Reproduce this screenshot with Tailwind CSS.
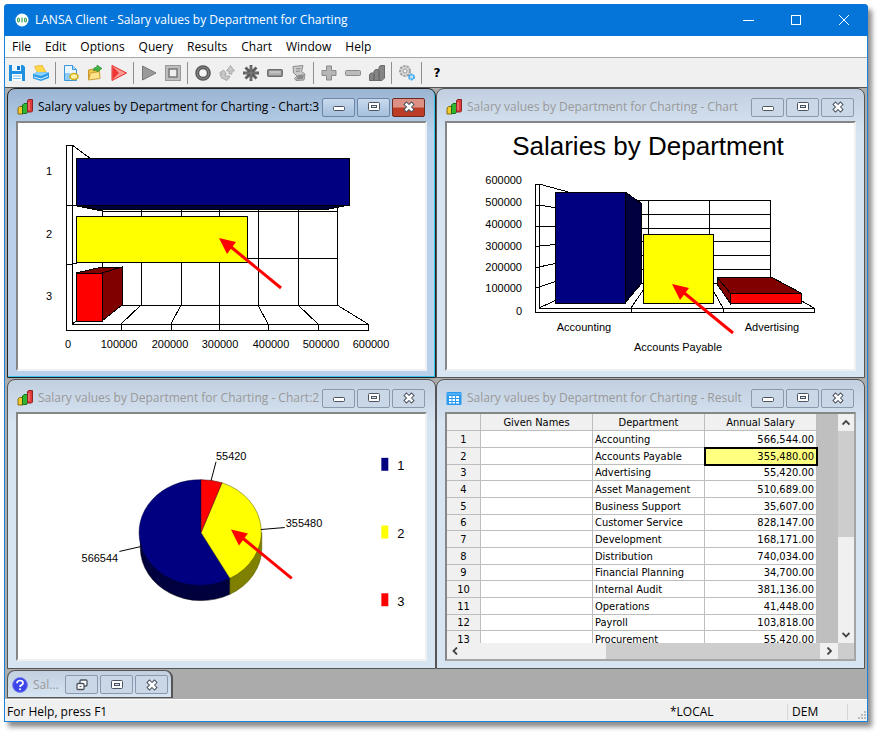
<!DOCTYPE html>
<html lang="en">
<head>
    <meta charset="UTF-8">
    <title>LANSA Client - Salary values by Department for Charting</title>
    <script src="https://cdn.jsdelivr.net/npm/@tailwindcss/browser@4"></script>
</head>
<body class="bg-white h-screen pt-1 pl-1 pr-[13px] pb-3 overflow-hidden font-['Open_Sans','Noto_Sans',sans-serif] text-xs text-black">

    <!-- shared icons -->
    <svg class="hidden">
        <symbol id="i-chart" viewBox="0 0 16 16">
            <path d="M1 9l1.500-1.500H6V15H1z" fill="#f0c92c" stroke="#8a6a12"/>
            <path d="M5.500 6L7 4.500h3.500V13L9.500 14.500h-4z" fill="#2fb52f" stroke="#14701a"/>
            <path d="M10.500 1.500L11.500.5h4V12l-1 1h-4z" fill="#e03a3a" stroke="#8d2727"/>
            <path d="M12 3v8" stroke="#f79a9a"/>
        </symbol>
        <symbol id="i-min" viewBox="0 0 14 12">
            <rect x="1.500" y="5.500" width="11" height="4" rx="1" fill="#fff" stroke="#4b5260"/>
        </symbol>
        <symbol id="i-max" viewBox="0 0 14 12">
            <rect x="1.500" y="1.500" width="11" height="8" rx="1" fill="#fff" stroke="#4b5260"/>
            <rect x="4.500" y="4.500" width="5" height="2" fill="#dfe7f1" stroke="#4b5260"/>
        </symbol>
        <symbol id="i-close" viewBox="0 0 14 12">
            <path d="M4.500 3.500l5 5M9.500 3.500l-5 5" stroke="#4b5260" stroke-width="4.500" stroke-linecap="square"/>
            <path d="M4.500 3.500l5 5M9.500 3.500l-5 5" stroke="#fff" stroke-width="2.500" stroke-linecap="square"/>
        </symbol>
        <symbol id="i-restore" viewBox="0 0 14 12">
            <rect x="5" y="1" width="7" height="6" rx="1" fill="#fff" stroke="#4b5260" stroke-width="1.300"/>
            <rect x="2" y="4.500" width="7" height="6" rx="1" fill="#fff" stroke="#4b5260" stroke-width="1.300"/>
            <path d="M4.500 7.500h2" stroke="#4b5260"/>
        </symbol>
    </svg>

    <div class="h-full flex flex-col bg-[#f0f0f0] border-x border-b border-[#1a82dc] rounded-t shadow-[4px_5px_5px_rgba(0,0,0,0.45)]">

        <!-- title bar -->
        <header class="h-8 shrink-0 -mx-px flex items-center bg-[#0575da] text-white rounded-t pl-[10px]">
            <svg class="w-4 h-4 mr-[5px]" viewBox="0 0 16 16">
                <circle cx="8" cy="8" r="6.500" fill="#fff"/>
                <g fill="none" stroke="#3fa75a" stroke-width="1.200"><ellipse cx="4.500" cy="8" rx="1" ry="2"/><path d="M8 5.500v5"/><ellipse cx="11.500" cy="8" rx="1" ry="2"/></g>
            </svg>
            <h1 class="flex-1">LANSA Client - Salary values by Department for Charting</h1>
            <button class="w-12 h-8 flex items-center justify-center" aria-label="Minimize">
                <svg class="w-3 h-3" viewBox="0 0 12 12"><path d="M1 6.500h11" stroke="#fff"/></svg>
            </button>
            <button class="w-12 h-8 flex items-center justify-center" aria-label="Maximize">
                <svg class="w-3 h-3" viewBox="0 0 12 12"><rect x="1.500" y="1.500" width="9" height="9" fill="none" stroke="#fff"/></svg>
            </button>
            <button class="w-12 h-8 flex items-center justify-center" aria-label="Close">
                <svg class="w-3 h-3" viewBox="0 0 12 12"><path d="M1 1l10 10M11 1L1 11" stroke="#fff"/></svg>
            </button>
        </header>

        <!-- menu -->
        <nav class="h-[22px] shrink-0 flex items-center gap-[14px] pl-[7px] bg-white border-b border-[#a8a8a8]">
            <button>File</button>
            <button>Edit</button>
            <button>Options</button>
            <button>Query</button>
            <button>Results</button>
            <button>Chart</button>
            <button>Window</button>
            <button>Help</button>
        </nav>

        <!-- toolbar -->
        <div class="h-[29px] shrink-0 flex items-center">
            <button class="w-6 flex justify-center" aria-label="Save">
                <svg class="w-4 h-4" viewBox="0 0 16 16"><path d="M0 0h14l2 2v14H0z" fill="#1f8fe0"/><path d="M3 0h9v6H3z" fill="#eaf6ff"/><path d="M8 1h3v4H8z" fill="#1673c4"/><path d="M3 9h10v7H3z" fill="#fff"/><path d="M4 11h8M4 13.500h8" stroke="#76bdf0"/></svg>
            </button>
            <button class="w-6 flex justify-center" aria-label="Print">
                <svg class="w-4 h-4" viewBox="0 0 16 16"><path d="M1.500 1.500L9 0l4 7-8 1.500z" fill="#ffd84a" stroke="#e3ac1c" stroke-width=".7"/><path d="M0 9l4-2 12 .5V13l-8 3-8-2.500z" fill="#2c9be8"/><path d="M0 9l4-2 12 .5L8 11z" fill="#8fd2fb"/><path d="M1 12l7 2 7-3" stroke="#dff2ff" fill="none"/></svg>
            </button>
            <span class="w-px h-[22px] ml-[2px] mr-[3px] bg-[#8f8f8f]"></span>
            <button class="w-6 flex justify-center" aria-label="New query">
                <svg class="w-4 h-4" viewBox="0 0 16 16"><path d="M1.500.5h8l4 4v11h-12z" fill="#eaf6ff" stroke="#3a97dc"/><path d="M9.500.5v4h4" fill="#a9d8fa" stroke="#3a97dc"/><path d="M2 8h5v7H2z" fill="#8dcaf5"/><ellipse cx="11" cy="11.500" rx="4" ry="3" fill="#fff2a8" stroke="#cfae1c" stroke-width="1.600"/></svg>
            </button>
            <button class="w-6 flex justify-center" aria-label="Open query">
                <svg class="w-4 h-4" viewBox="0 0 16 16"><path d="M1.500 14V5l5-1 1 1.500 5-.5v8z" fill="#f3c44c" stroke="#c9962c"/><path d="M1.500 15l2-7 9-1.500.5 7z" fill="#ffe38a" stroke="#cf9f35"/><path d="M6 5q1-3 4-3V0l5 3.500L10 7V5Q8 4.500 7 6z" fill="#43b649" stroke="#22852a" stroke-width=".6"/></svg>
            </button>
            <button class="w-6 flex justify-center" aria-label="Run query">
                <svg class="w-4 h-4" viewBox="0 0 16 16"><path d="M1 .5L15.500 8 1 15.500z" fill="#ff9a92" stroke="#e22c2c"/><path d="M1.500 1.500L8 8l-6.500 6.500z" fill="#ee3434"/></svg>
            </button>
            <span class="w-px h-[22px] ml-[2px] mr-[3px] bg-[#8f8f8f]"></span>
            <button class="w-6 flex justify-center" aria-label="Run">
                <svg class="w-4 h-4" viewBox="0 0 16 16"><path d="M1.500 1L15 8 1.500 15z" fill="#9a9a9a" stroke="#777"/></svg>
            </button>
            <button class="w-6 flex justify-center" aria-label="Stop">
                <svg class="w-4 h-4" viewBox="0 0 16 16"><rect x=".5" y=".5" width="15" height="15" fill="#bdbdbd" stroke="#999"/><rect x="4" y="4" width="8" height="8" fill="#eee" stroke="#777" stroke-width="1.500"/></svg>
            </button>
            <span class="w-px h-[22px] ml-[2px] mr-[3px] bg-[#8f8f8f]"></span>
            <button class="w-6 flex justify-center" aria-label="Circle">
                <svg class="w-4 h-4" viewBox="0 0 16 16"><circle cx="8" cy="8" r="5.800" fill="#f4f4f4" stroke="#555" stroke-width="4"/><circle cx="8" cy="8" r="5.800" fill="none" stroke="#7d7d7d" stroke-width="1.500"/></svg>
            </button>
            <button class="w-6 flex justify-center" aria-label="Sort">
                <svg class="w-4 h-4" viewBox="0 0 16 16"><path d="M11.500.5L15.500 6h-2.500v3h-3V6H7.500zM4.500 5l3 4H6v2h5l-1.500 3H8v1.500L2.500 13 1 9.500h1.500V8H.5z" fill="#c8c8c8" stroke="#a0a0a0" stroke-width=".8"/></svg>
            </button>
            <button class="w-6 flex justify-center" aria-label="Select all">
                <svg class="w-4 h-4" viewBox="0 0 16 16"><path d="M8 0v16M0 8h16M2.500 2.500l11 11M13.500 2.500l-11 11" stroke="#5c5c5c" stroke-width="2.800"/><path d="M8 1.500v13M1.500 8h13" stroke="#8c8c8c" stroke-width=".8"/></svg>
            </button>
            <button class="w-6 flex justify-center" aria-label="Box">
                <svg class="w-4 h-4" viewBox="0 0 16 16"><rect x=".8" y="4.800" width="14.400" height="6.400" rx="1" fill="#b0b0b0" stroke="#6c6c6c" stroke-width="1.500"/><path d="M3 7h10" stroke="#d5d5d5"/></svg>
            </button>
            <button class="w-6 flex justify-center" aria-label="Report">
                <svg class="w-4 h-4" viewBox="0 0 16 16"><path d="M2 1.500l10-1-1.500 6L14 9l-1 6-8 .5-1.500-2L6 11 2.500 8z" fill="#c9c9c9" stroke="#8e8e8e"/><path d="M5 4l4.500-.5M5 6.500l4-.5" stroke="#888"/><path d="M7 10l6-.5-1 4.500-7 .5z" fill="#8b8b8b"/></svg>
            </button>
            <span class="w-px h-[22px] ml-[2px] mr-[3px] bg-[#8f8f8f]"></span>
            <button class="w-6 flex justify-center" aria-label="Add">
                <svg class="w-4 h-4" viewBox="0 0 16 16"><path d="M5.500 1h5v4.500H15v5h-4.500V15h-5v-4.500H1v-5h4.500z" fill="#b5b5b5" stroke="#8a8a8a"/></svg>
            </button>
            <button class="w-6 flex justify-center" aria-label="Remove">
                <svg class="w-4 h-4" viewBox="0 0 16 16"><rect x=".5" y="5.500" width="15" height="5" rx="1" fill="#bcbcbc" stroke="#8a8a8a"/></svg>
            </button>
            <button class="w-6 flex justify-center" aria-label="Chart">
                <svg class="w-4 h-4" viewBox="0 0 16 16"><path d="M.5 9.500L2 8h3V6l1.500-1.500H10V2l1.500-1.500h4V13L13 15.500H.5z" fill="#858585" stroke="#6b6b6b"/><path d="M5 9v6M10 5.500V15" stroke="#5b5b5b"/></svg>
            </button>
            <span class="w-px h-[22px] ml-[2px] mr-[3px] bg-[#8f8f8f]"></span>
            <button class="w-6 flex justify-center" aria-label="Settings">
                <svg class="w-4 h-4" viewBox="0 0 16 16"><circle cx="6" cy="6" r="5" fill="#d9d9d9" stroke="#a3a3a3" stroke-width="2" stroke-dasharray="2.500 1"/><circle cx="6" cy="6" r="2" fill="#f5f5f5" stroke="#999"/><circle cx="12.500" cy="12" r="2.500" fill="#c5e6fb" stroke="#3ca5ea" stroke-width="2" stroke-dasharray="2 .6"/></svg>
            </button>
            <span class="w-px h-[22px] ml-[2px] mr-[3px] bg-[#8f8f8f]"></span>
            <button class="w-6 text-center font-['DejaVu_Sans',sans-serif] font-bold" aria-label="Help">?</button>
        </div>

        <!-- child windows -->
        <main class="flex-1 min-h-0 flex flex-col bg-[#ababab] border-t border-[#555] px-[2px]">
            <div class="flex-1 grid grid-cols-2 grid-rows-2 gap-y-px min-h-0">

                <section class="flex flex-col min-h-0 px-2 pb-[6px] rounded-t-lg border border-[#222] bg-[#b9d1ea] bg-linear-to-b from-[#9ab4d2] to-[#b9d1ea] to-15% shadow-[inset_-1px_-1px_0_#35c6ee]">
                    <div class="h-8 shrink-0 flex items-center gap-[2px] pt-1 pl-px pr-[2px]">
                        <svg class="w-4 h-4 mr-[3px]"><use href="#i-chart"/></svg>
                        <h2 class="flex-1 whitespace-nowrap">Salary values by Department for Charting - Chart:3</h2>
                        <button class="w-[33px] h-[19px] flex items-center justify-center rounded-xs border border-[#6e86a6] bg-linear-to-b from-[#c8daee] to-[#a5bfdd]" aria-label="Minimize"><svg class="w-[14px] h-3"><use href="#i-min"/></svg></button>
                        <button class="w-[33px] h-[19px] flex items-center justify-center rounded-xs border border-[#6e86a6] bg-linear-to-b from-[#c8daee] to-[#a5bfdd]" aria-label="Maximize"><svg class="w-[14px] h-3"><use href="#i-max"/></svg></button>
                        <button class="w-[33px] h-[19px] flex items-center justify-center rounded-xs border border-[#6b2a22] bg-linear-to-b from-[#dc9184] from-45% to-[#bd3c26] to-55%" aria-label="Close"><svg class="w-[14px] h-3"><use href="#i-close"/></svg></button>
                    </div>
                    <div class="flex-1 min-h-0 bg-white border-2 border-t-[#868686] border-l-[#868686] border-r-[#eef0f2] border-b-[#eef0f2]">
                        <svg class="w-full h-full font-['Liberation_Sans',Arial,sans-serif] text-[11px]" viewBox="18 122 407 246" shape-rendering="crispEdges">
                            <g fill="none" stroke="#000">
                                <path d="M66 144h6v180M66 144v185h302v-6H72M66 204h6M66 263h6M72 144l30 22v142M72 323l30-19"/>
                                <path d="M102 210h235M102 257h235M122 304h215M337 204v100l31 19v6"/>
                                <path d="M141 205v99l-20 19v6M181 205v99l-10 19v6M219 205v124M258 205v99l10 19v6M298 205v99l20 19v6"/>
                                <path d="M72 204l30 6M72 263l30-6"/>
                            </g>
                            <g stroke="#000">
                                <path d="M76 204h273l-20 4H96z" fill="#00003f"/>
                                <path d="M76 157h273v47H76z" fill="#000080"/>
                                <path d="M76 215h171v46H76z" fill="#ff0"/>
                                <path d="M76 272l26-6h20l-20 6z" fill="#800000"/>
                                <path d="M102 272l20-6v38l-20 16z" fill="#800000"/>
                                <path d="M76 272h26v48H76z" fill="#f00"/>
                            </g>
                            <g text-anchor="middle">
                                <text x="49" y="174">1</text>
                                <text x="49" y="237">2</text>
                                <text x="49" y="299">3</text>
                                <text x="68" y="347">0</text>
                                <text x="119" y="347">100000</text>
                                <text x="170" y="347">200000</text>
                                <text x="220" y="347">300000</text>
                                <text x="271" y="347">400000</text>
                                <text x="321" y="347">500000</text>
                                <text x="371" y="347">600000</text>
                            </g>
                            <g shape-rendering="auto"><path d="M281 287l-50-41" stroke="#f00" stroke-width="3"/><path d="M219 237l17 4-9 12z" fill="#f00"/></g>
                        </svg>
                    </div>
                </section>

                <section class="flex flex-col min-h-0 px-2 pb-[6px] rounded-t-lg border border-[#555] bg-linear-to-b from-[#c1cfe0] to-[#d7e4f2] to-15%">
                    <div class="h-8 shrink-0 flex items-center gap-[2px] pt-1 pl-px pr-[2px]">
                        <svg class="w-4 h-4 mr-[3px]"><use href="#i-chart"/></svg>
                        <h2 class="flex-1 whitespace-nowrap text-[#999]">Salary values by Department for Charting - Chart</h2>
                        <button class="w-[33px] h-[19px] flex items-center justify-center rounded-xs border border-[#8b99ae] bg-[#cad7e6]" aria-label="Minimize"><svg class="w-[14px] h-3"><use href="#i-min"/></svg></button>
                        <button class="w-[33px] h-[19px] flex items-center justify-center rounded-xs border border-[#8b99ae] bg-[#cad7e6]" aria-label="Maximize"><svg class="w-[14px] h-3"><use href="#i-max"/></svg></button>
                        <button class="w-[33px] h-[19px] flex items-center justify-center rounded-xs border border-[#8b99ae] bg-[#cad7e6]" aria-label="Close"><svg class="w-[14px] h-3"><use href="#i-close"/></svg></button>
                    </div>
                    <div class="flex-1 min-h-0 bg-white border-2 border-t-[#868686] border-l-[#868686] border-r-[#eef0f2] border-b-[#eef0f2]">
                        <svg class="w-full h-full font-['Liberation_Sans',Arial,sans-serif] text-[11px]" viewBox="447 122 407 246" shape-rendering="crispEdges">
                            <text x="648" y="154" text-anchor="middle" class="text-[26px]">Salaries by Department</text>
                            <g fill="none" stroke="#000">
                                <path d="M535 183h4v124M535 183v128h279v-4H539M539 183l55 15v85M535 204h4l55 9M535 225h4l55 2M535 245h4l55-5M535 266h4l55-12M535 286h4l55-18M539 307l55-25"/>
                                <path d="M594 199h176v84M594 213h176M594 227h176M594 240h176M594 254h176M594 268h176M594 282h176l44 25v4"/>
                                <path d="M648 199v83l-17 25v4M709 199v83l14 25v4"/>
                            </g>
                            <g stroke="#000">
                                <path d="M625 191l16 11v81l-16 19z" fill="#00003f"/>
                                <path d="M555 191h70v111h-70z" fill="#000080"/>
                                <path d="M643 233h70v69h-70z" fill="#ff0"/>
                                <path d="M717 276h54l30 16h-71z" fill="#800000"/>
                                <path d="M717 276l13 16v10l-13-19z" fill="#800000"/>
                                <path d="M730 292h71v10h-71z" fill="#f00"/>
                            </g>
                            <g text-anchor="end">
                                <text x="522" y="183">600000</text>
                                <text x="522" y="205">500000</text>
                                <text x="522" y="227">400000</text>
                                <text x="522" y="249">300000</text>
                                <text x="522" y="270">200000</text>
                                <text x="522" y="291">100000</text>
                                <text x="522" y="314">0</text>
                            </g>
                            <g text-anchor="middle">
                                <text x="584" y="330">Accounting</text>
                                <text x="678" y="350">Accounts Payable</text>
                                <text x="772" y="330">Advertising</text>
                            </g>
                            <g shape-rendering="auto"><path d="M733 332l-50-41" stroke="#f00" stroke-width="3"/><path d="M672 283l17 4-9 12z" fill="#f00"/></g>
                        </svg>
                    </div>
                </section>

                <section class="flex flex-col min-h-0 px-2 pb-[7px] rounded-t-lg border border-[#555] bg-linear-to-b from-[#c1cfe0] to-[#d7e4f2] to-15%">
                    <div class="h-8 shrink-0 flex items-center gap-[2px] pt-1 pl-px pr-[2px]">
                        <svg class="w-4 h-4 mr-[3px]"><use href="#i-chart"/></svg>
                        <h2 class="flex-1 whitespace-nowrap text-[#999]">Salary values by Department for Charting - Chart:2</h2>
                        <button class="w-[33px] h-[19px] flex items-center justify-center rounded-xs border border-[#8b99ae] bg-[#cad7e6]" aria-label="Minimize"><svg class="w-[14px] h-3"><use href="#i-min"/></svg></button>
                        <button class="w-[33px] h-[19px] flex items-center justify-center rounded-xs border border-[#8b99ae] bg-[#cad7e6]" aria-label="Maximize"><svg class="w-[14px] h-3"><use href="#i-max"/></svg></button>
                        <button class="w-[33px] h-[19px] flex items-center justify-center rounded-xs border border-[#8b99ae] bg-[#cad7e6]" aria-label="Close"><svg class="w-[14px] h-3"><use href="#i-close"/></svg></button>
                    </div>
                    <div class="flex-1 min-h-0 bg-white border-2 border-t-[#868686] border-l-[#868686] border-r-[#eef0f2] border-b-[#eef0f2]">
                        <svg class="w-full h-full font-['Liberation_Sans',Arial,sans-serif] text-[11px]" viewBox="18 413 407 246">
                            <path d="M140 532v16A61 53 0 0 0 230 594V578z" fill="#00003f" stroke="#000" stroke-width=".5"/>
                            <path d="M262 532v16A61 53 0 0 1 230 594V578z" fill="#808000" stroke="#555500" stroke-width=".5"/>
                            <path d="M201 532V479A61 53 0 1 0 230 578z" fill="#000080" stroke="#000040" stroke-width=".5"/>
                            <path d="M201 532L222 482A61 53 0 0 1 230 578z" fill="#ff0" stroke="#555500" stroke-width=".5"/>
                            <path d="M201 532V479A61 53 0 0 1 222 482z" fill="#f00" stroke="#400" stroke-width=".5"/>
                            <path d="M211 480l5-19M261 529l24-2M141 546l-22 5" stroke="#000" fill="none"/>
                            <text x="216" y="459">55420</text>
                            <text x="286" y="526">355480</text>
                            <text x="81" y="562">566544</text>
                            <path d="M382 457h7v13h-7z" fill="#000080"/>
                            <path d="M382 525h7v13h-7z" fill="#ff0"/>
                            <path d="M382 593h7v13h-7z" fill="#f00"/>
                            <g class="text-[13px]">
                                <text x="398" y="469">1</text>
                                <text x="398" y="538">2</text>
                                <text x="398" y="606">3</text>
                            </g>
                            <path d="M292 578l-50-41" stroke="#f00" stroke-width="3"/><path d="M231 529l17 4-9 12z" fill="#f00"/>
                        </svg>
                    </div>
                </section>

                <section class="flex flex-col min-h-0 px-2 pb-[7px] rounded-t-lg border border-[#555] bg-linear-to-b from-[#c1cfe0] to-[#d7e4f2] to-15%">
                    <div class="h-8 shrink-0 flex items-center gap-[2px] pt-1 pl-px pr-[2px]">
                        <svg class="w-4 h-4 mr-[3px]" viewBox="0 0 16 16"><rect x=".5" y="2" width="15" height="13" rx="1" fill="#2a9af0"/><path d="M1 4h14" stroke="#74c2fa"/><path d="M3 6h2.500v2H3zM6.500 6H9v2H6.500zM10 6h3v2h-3zM3 9h2.500v2H3zM6.500 9H9v2H6.500zM10 9h3v2h-3zM3 12h2.500v1.500H3zM6.500 12H9v1.500H6.500zM10 12h3v1.500h-3z" fill="#fff"/></svg>
                        <h2 class="flex-1 whitespace-nowrap text-[#999]">Salary values by Department for Charting - Result</h2>
                        <button class="w-[33px] h-[19px] flex items-center justify-center rounded-xs border border-[#8b99ae] bg-[#cad7e6]" aria-label="Minimize"><svg class="w-[14px] h-3"><use href="#i-min"/></svg></button>
                        <button class="w-[33px] h-[19px] flex items-center justify-center rounded-xs border border-[#8b99ae] bg-[#cad7e6]" aria-label="Maximize"><svg class="w-[14px] h-3"><use href="#i-max"/></svg></button>
                        <button class="w-[33px] h-[19px] flex items-center justify-center rounded-xs border border-[#8b99ae] bg-[#cad7e6]" aria-label="Close"><svg class="w-[14px] h-3"><use href="#i-close"/></svg></button>
                    </div>
                    <div class="flex-1 min-h-0 flex flex-col border-2 border-[#868686] border-r-[#a5a5a5] border-b-[#a5a5a5]">
                        <div class="flex-1 min-h-0 flex">
                            <div class="flex-1 min-w-0 overflow-hidden bg-[#bfbfbf]">
                                <table class="table-fixed w-[370px] border-separate border-spacing-0 bg-white text-right font-['DejaVu_Sans_Condensed','DejaVu_Sans',sans-serif] text-[11px] leading-none [&_td]:border-r [&_td]:border-b [&_td]:border-[#bdbdbd] [&_th]:border-r [&_th]:border-b [&_th]:border-[#bdbdbd] [&_th]:bg-[#f0f0f0] [&_th]:font-normal [&_th]:text-center [&_td:nth-child(3)]:text-left [&_td:nth-child(3)]:pl-[2px] [&_td]:pr-[2px]">
                                    <colgroup><col class="w-[34px]"><col class="w-28"><col class="w-28"><col class="w-28"></colgroup>
                                    <thead>
                                        <tr class="h-[17px]"><th></th><th>Given Names</th><th>Department</th><th>Annual Salary</th></tr>
                                    </thead>
                                    <tbody class="[&>tr]:h-[17px] [&>tr:nth-child(3n)]:h-4">
                                        <tr><th>1</th><td></td><td>Accounting</td><td>566,544.00</td></tr>
                                        <tr><th>2</th><td></td><td>Accounts Payable</td><td class="bg-[#ffff80] outline-2 -outline-offset-1 outline-black">355,480.00</td></tr>
                                        <tr><th>3</th><td></td><td>Advertising</td><td>55,420.00</td></tr>
                                        <tr><th>4</th><td></td><td>Asset Management</td><td>510,689.00</td></tr>
                                        <tr><th>5</th><td></td><td>Business Support</td><td>35,607.00</td></tr>
                                        <tr><th>6</th><td></td><td>Customer Service</td><td>828,147.00</td></tr>
                                        <tr><th>7</th><td></td><td>Development</td><td>168,171.00</td></tr>
                                        <tr><th>8</th><td></td><td>Distribution</td><td>740,034.00</td></tr>
                                        <tr><th>9</th><td></td><td>Financial Planning</td><td>34,700.00</td></tr>
                                        <tr><th>10</th><td></td><td>Internal Audit</td><td>381,136.00</td></tr>
                                        <tr><th>11</th><td></td><td>Operations</td><td>41,448.00</td></tr>
                                        <tr><th>12</th><td></td><td>Payroll</td><td>103,818.00</td></tr>
                                        <tr><th>13</th><td></td><td>Procurement</td><td>55,420.00</td></tr>
                                    </tbody>
                                </table>
                            </div>
                            <!-- vertical scroll bar -->
                            <div class="w-4 shrink-0 flex flex-col bg-[#f0f0f0]">
                                <button class="h-[17px] flex items-center justify-center" aria-label="Scroll up"><svg class="w-2 h-2" viewBox="0 0 8 8"><path d="M0.500 5.500L4 2l3.500 3.500" fill="none" stroke="#444" stroke-width="1.800"/></svg></button>
                                <div class="h-[106px] bg-[#cdcdcd]"></div>
                                <button class="h-4 mt-auto flex items-center justify-center" aria-label="Scroll down"><svg class="w-2 h-2" viewBox="0 0 8 8"><path d="M0.500 2L4 5.500 7.500 2" fill="none" stroke="#444" stroke-width="1.800"/></svg></button>
                            </div>
                        </div>
                        <!-- horizontal scroll bar -->
                        <div class="h-4 shrink-0 flex bg-[#f0f0f0]">
                            <button class="w-4 flex items-center justify-center" aria-label="Scroll left"><svg class="w-2 h-2" viewBox="0 0 8 8"><path d="M6 .5L2.500 4 6 7.500" fill="none" stroke="#444" stroke-width="1.800"/></svg></button>
                            <div class="w-[214px] ml-auto bg-[#cdcdcd]"></div>
                            <button class="w-[18px] flex items-center justify-center" aria-label="Scroll right"><svg class="w-2 h-2" viewBox="0 0 8 8"><path d="M2.500 .5L6 4 2.500 7.500" fill="none" stroke="#444" stroke-width="1.800"/></svg></button>
                            <div class="w-4 bg-[#cdcdcd]"></div>
                        </div>
                    </div>
                </section>
            </div>

            <!-- minimized window -->
            <div class="h-[30px] shrink-0 pt-px pb-px">
                <section class="w-[166px] h-[28px] flex items-center gap-[2px] pt-px pl-1 pr-[3px] rounded-t-lg border border-r-2 border-[#555] bg-linear-to-b from-[#c1cfe0] to-[#d7e4f2]">
                    <svg class="w-4 h-4 mr-[3px]" viewBox="0 0 16 16"><circle cx="8" cy="8" r="7.500" fill="#3b45e8" stroke="#8087e8"/><path d="M5 6.200q0-2.700 3-2.700t3 2.400q0 1.500-1.600 2.200Q8 8.700 8 10" fill="none" stroke="#fff" stroke-width="1.700"/><circle cx="8" cy="12.300" r="1" fill="#fff"/></svg>
                    <h2 class="flex-1 whitespace-nowrap text-[#999]">Sal...</h2>
                    <button class="w-[33px] h-[19px] flex items-center justify-center rounded-xs border border-[#8b99ae] bg-[#cad7e6]" aria-label="Restore"><svg class="w-[14px] h-3"><use href="#i-restore"/></svg></button>
                    <button class="w-[33px] h-[19px] flex items-center justify-center rounded-xs border border-[#8b99ae] bg-[#cad7e6]" aria-label="Maximize"><svg class="w-[14px] h-3"><use href="#i-max"/></svg></button>
                    <button class="w-[33px] h-[19px] flex items-center justify-center rounded-xs border border-[#8b99ae] bg-[#cad7e6]" aria-label="Close"><svg class="w-[14px] h-3"><use href="#i-close"/></svg></button>
                </section>
            </div>
        </main>

        <!-- status bar -->
        <footer class="h-[22px] shrink-0 flex items-center border-t border-white pt-[3px] pl-[2px]">
            <span class="flex-1">For Help, press F1</span>
            <span class="w-[117px]">*LOCAL</span>
            <span class="w-[60px] border-l border-[#d7d7d7] pl-1">DEM</span>
            <span class="w-5 h-4 border-l border-[#d7d7d7] flex items-end justify-end">
                <svg class="w-[10px] h-[10px]" viewBox="0 0 10 10"><path d="M7 1h2v2H7zM4 4h2v2H4zM7 4h2v2H7zM1 7h2v2H1zM4 7h2v2H4zM7 7h2v2H7z" fill="#bbb"/></svg>
            </span>
        </footer>
    </div>
</body>
</html>
